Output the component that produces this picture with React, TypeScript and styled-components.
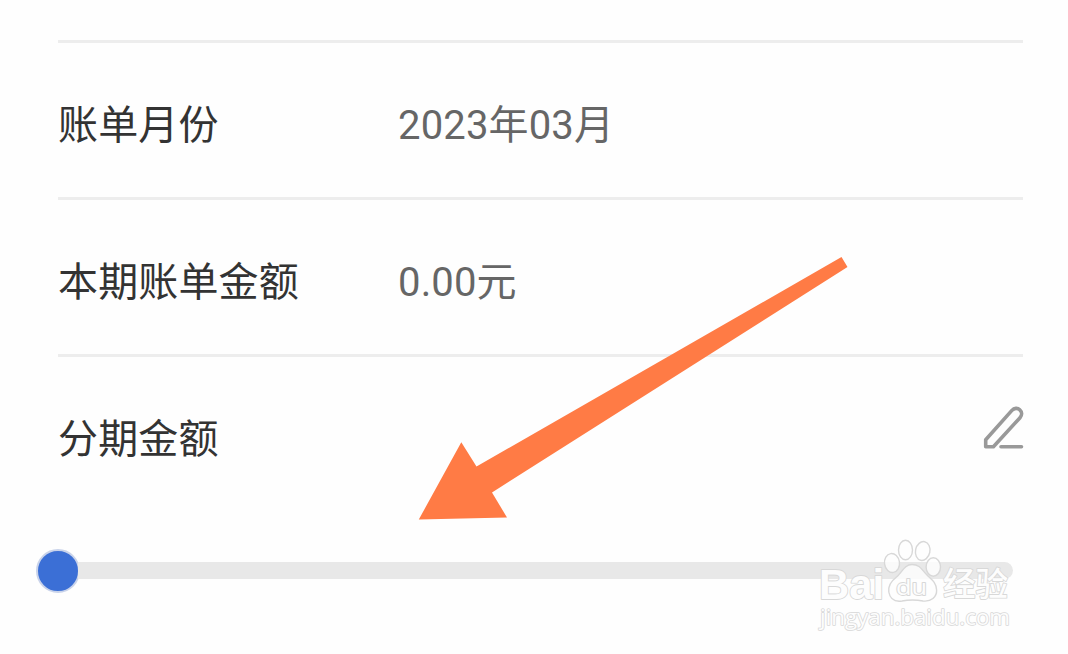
import React from "react";
import styled, { createGlobalStyle } from "styled-components";

const GlobalStyle = createGlobalStyle`
	* {
		box-sizing: border-box;
	}
	body {
		margin: 0;
		background: #fefefe;
		font-family: Roboto, "Noto Sans CJK SC", sans-serif;
	}
`;

const Page = styled.main`
	position: relative;
	width: 1068px;
	height: 654px;
	padding: 40px 45px 0 58px;
	overflow: hidden;
`;

const Row = styled.div`
	display: flex;
	height: 157px;
	padding-top: 53px;
	border-top: 3px solid #ededed;
	font-size: 40px;
	line-height: 60px;
	letter-spacing: 0.15px;
	white-space: nowrap;
`;

const Label = styled.span`
	width: 340px;
	color: #333;
`;

const Value = styled.span`
	flex: 1;
	color: #666;
`;

const EditButton = styled.button`
	width: 42px;
	height: 46px;
	margin: -6px -2px 0 0;
	padding: 0;
	border: 0;
	background: none;
	cursor: pointer;
	svg {
		display: block;
	}
`;

const Slider = styled.div`
	display: flex;
	align-items: flex-start;
	height: 44px;
	margin: 38px 10px 0 -22px;
`;

const Thumb = styled.div`
	flex: none;
	width: 44px;
	height: 44px;
	border: 2px solid #c9d3ea;
	border-radius: 50%;
	background: #3b6fd6;
`;

const Track = styled.div`
	flex: 1;
	height: 17px;
	margin: 13px 0 0 -2px;
	border-radius: 0 9px 9px 0;
	background: #e8e8e8;
`;

const Arrow = styled.svg`
	position: absolute;
	left: 418px;
	top: 256px;
`;

const Watermark = styled.svg`
	position: absolute;
	left: 810px;
	top: 532px;
	fill: rgba(254, 254, 254, 0.8);
	stroke: #d8d8d8;
	stroke-width: 1.4px;
	stroke-linejoin: round;
`;

const MarkText = styled.text<{ $family: string; $size: number; $weight: number; $line?: number }>`
	font-family: ${(p) => p.$family}, sans-serif;
	font-size: ${(p) => p.$size}px;
	font-weight: ${(p) => p.$weight};
	stroke-width: ${(p) => p.$line ?? 1.8}px;
	paint-order: stroke;
	fill: #fdfdfd;
`;

const rows = [
	{ label: "账单月份", value: "2023年03月" },
	{ label: "本期账单金额", value: "0.00元" },
];

const PencilIcon: React.FC = () => (
	<svg width="42" height="46" viewBox="0 0 42 46" fill="none" stroke="#999" strokeWidth="3.6" strokeLinecap="round" strokeLinejoin="round">
		<path d="M2.7 42.8V35.8L28.9 6.4C31.2 3.9 34.6 3.7 36.8 5.8C39.1 7.9 39.2 11.2 37 13.7L10.4 42.8Z" />
		<path d="M18 42.8H38.5" />
	</svg>
);

const BaiduMark: React.FC = () => (
	<Watermark width="220" height="110" viewBox="810 532 220 110">
		<MarkText $family="Liberation Sans" $size={42} $weight={700} x="819" y="598.5" textLength="65" lengthAdjust="spacingAndGlyphs">
			Bai
		</MarkText>
		<ellipse cx="892" cy="563" rx="7.5" ry="9.5" transform="rotate(-8 892 563)" />
		<ellipse cx="905.5" cy="550" rx="7" ry="9.8" />
		<ellipse cx="922.7" cy="551" rx="7.2" ry="9.5" transform="rotate(12 922.7 551)" />
		<ellipse cx="933.3" cy="567" rx="7.2" ry="9.2" />
		<path d="M912 564.5C904 564.5 902 573 896 577.5C890 582 888 586 888.8 592C890 599 895 602 902 601C909 599.6 916 599.6 923 601C931 602 937 597 936.6 590C936.3 582 931 579 927 575C922 570 920 564.5 912 564.5Z" />
		<MarkText $family="Open Sans" $size={21} $weight={400} x="896" y="594.5" textLength="31" lengthAdjust="spacingAndGlyphs">
			du
		</MarkText>
		<MarkText $family="Noto Sans CJK SC" $size={33} $weight={500} x="943" y="596" textLength="65" lengthAdjust="spacingAndGlyphs">
			经验
		</MarkText>
		<MarkText $family="Open Sans" $size={22} $weight={400} $line={1.6} x="820" y="624.5" textLength="190" lengthAdjust="spacingAndGlyphs">
			jingyan.baidu.com
		</MarkText>
	</Watermark>
);

const App: React.FC = () => {
	return (
		<Page>
			<GlobalStyle />
			{rows.map((row) => (
				<Row key={row.label}>
					<Label>{row.label}</Label>
					<Value>{row.value}</Value>
				</Row>
			))}
			<Row>
				<Label>分期金额</Label>
				<Value />
				<EditButton aria-label="编辑">
					<PencilIcon />
				</EditButton>
			</Row>
			<Slider>
				<Thumb />
				<Track />
			</Slider>
			<BaiduMark />
			<Arrow width="430" height="264" viewBox="418 256 430 264">
				<path d="M418.8 519.5L461.3 442.3L476.5 466.5L841.5 257L847.5 267L492 492.5L507 517.5Z" fill="#ff7b45" />
			</Arrow>
		</Page>
	);
};

export default App;
